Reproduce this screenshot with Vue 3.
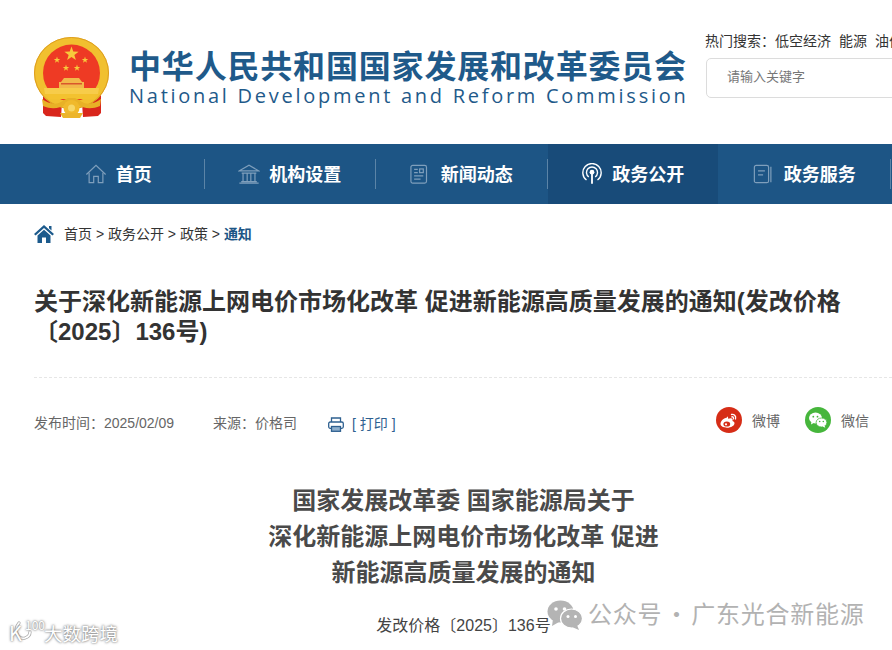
<template>
  <div class="page">
    <header class="head">
      <svg class="emblem" viewBox="0 0 76 82" width="76" height="82">
        <path d="M9 58 L28 66 L27 80 L12 79 L9 76Z" fill="#d9261c"/>
        <path d="M67 58 L48 66 L49 80 L64 79 L67 76Z" fill="#d9261c"/>
        <ellipse cx="37.5" cy="36" rx="37.5" ry="36" fill="#f1c02f"/>
        <ellipse cx="37.5" cy="36" rx="37" ry="35.5" fill="none" stroke="#dd9d1f" stroke-width="1"/>
        <circle cx="37.5" cy="36" r="28.5" fill="#ee3a24"/>
        <polygon :points="star(37.5,17,7.5)" fill="#f7c93c"/>
        <polygon :points="star(23,23,3.4)" fill="#f7c93c"/>
        <polygon :points="star(51,23,3.4)" fill="#f7c93c"/>
        <polygon :points="star(32,31,3.4)" fill="#f7c93c"/>
        <polygon :points="star(43,31,3.4)" fill="#f7c93c"/>
        <path d="M30 41 H45 L48 45 H50 V51 H25 V45 H27Z" fill="#f2b84a"/>
        <path d="M27 46 H48 V47.500 H27Z" fill="#d9572c"/>
        <path d="M10 51 H65 L64 57 H11Z" fill="#f7cc4a"/>
        <path d="M12 57 H63 L60 62 H15Z" fill="#f3c22f"/>
        <path d="M8 62 C16 68 24 68 30 63 L34 61 H41 L45 63 C51 68 59 68 67 62 L66 69 C57 73 49 71 44 68 H31 C26 71 18 73 9 69Z" fill="#e8b126"/>
        <circle cx="37.5" cy="71" r="8" fill="#f0b92b"/>
        <circle cx="37.5" cy="71" r="3.5" fill="#f7d766"/>
        <path d="M26 76 H49 L46 81 H29Z" fill="#ecb52a"/>
      </svg>
      <div class="brand">
        <div class="brand-cn">中华人民共和国国家发展和改革委员会</div>
        <div class="brand-en">National Development and Reform Commission</div>
      </div>
      <div class="search-col">
        <div class="hot">热门搜索：<span>低空经济</span><span>能源</span><span>油价</span></div>
        <div class="search-box">请输入关键字</div>
      </div>
    </header>

    <nav class="nav">
      <template v-for="(item, i) in navItems" :key="item.label">
        <a class="nav-item" :class="{ active: item.active }">
          <svg class="nav-icon" viewBox="0 0 24 24" width="22" height="22" fill="none" stroke-width="1.3" :stroke="item.active ? '#fff' : '#7f9fbc'">
            <g v-if="item.icon === 'home'"><path d="M1.5 12.5 12 2.5l10.5 10"/><path d="M4.5 10.5V21.5H9.5V14.5H14.5V21.5H19.5V10.5"/></g>
            <g v-else-if="item.icon === 'bank'"><path d="M1.5 8.5 12 2.5l10.5 6Z"/><path d="M4 11H20M5.5 11V20M10 11V20M14 11V20M18.500 11V20M1.500 22H22.500M3.500 20.300H20.500"/></g>
            <g v-else-if="item.icon === 'news'"><rect x="1" y="2.500" width="17" height="19.500" rx="2"/><path d="M4.500 7H8.500M4.500 10.500H8.500M4.500 14H14.500M4.500 17.500H11.500"/><rect x="10.500" y="6.500" width="4" height="4"/></g>
            <g v-else-if="item.icon === 'signal'"><circle cx="12" cy="10" r="2.600" fill="#fff" stroke="none"/><path d="M12 11V22.500" stroke-width="2"/><path d="M8.500 15.200a6 6 0 1 1 7 0M6 18.600a10 10 0 1 1 12 0" stroke-width="1.500"/></g>
            <g v-else><rect x="1.500" y="2.500" width="15.500" height="19" rx="2"/><path d="M5.500 8.500H13M5.500 13H11M19.500 4V21"/></g>
          </svg>
          <span class="nav-label">{{ item.label }}</span>
        </a>
        <i class="sep" :class="{ hidden: item.active }"></i>
      </template>
    </nav>

    <main class="content">
      <div class="crumb">
        <svg class="crumb-home" viewBox="0 0 20 18" width="20" height="18">
          <path d="M10 0 L20 9 L18.400 10.500 L10 3 L1.600 10.500 L0 9Z M15 1 H17.500 V5.500 L15 3.300Z" fill="#1c5a8c"/>
          <path d="M3.500 10.500 L10 4.800 L16.500 10.500 V18 H12 V12.500 H8 V18 H3.500Z" fill="#1c5a8c"/>
        </svg>
        <span class="crumb-text">首页 &gt; 政务公开 &gt; 政策 &gt; <b>通知</b></span>
      </div>

      <h1 class="title">关于深化新能源上网电价市场化改革 促进新能源高质量发展的通知(发改价格〔2025〕136号)</h1>

      <div class="meta">
        <span class="date">发布时间：2025/02/09</span>
        <span class="source">来源：价格司</span>
        <svg class="printer" viewBox="0 0 16 15" width="16" height="15" fill="none" stroke="#2e6090" stroke-width="1.300">
          <path d="M3.500 5V1H12.500V5"/>
          <rect x="0.700" y="5" width="14.600" height="6.300" rx="1.500"/>
          <rect x="3.500" y="9.500" width="9" height="4.800" fill="#8fb0cd"/>
        </svg>
        <span class="print">[ 打印 ]</span>
        <div class="share">
          <span class="circle weibo">
            <svg viewBox="0 0 26 26" width="26" height="26">
              <path d="M11 10.500c-4 .800-6.500 4-6.500 6.300 0 2.500 3 3.900 6.500 3.900 4.300 0 7.500-2.300 7.500-4.500 0-1.500-1.300-2-2.100-2.300.6-1.500.2-2.600-1.600-2.700-1 0-2 .3-2.700.6.300-1.200-.2-2.300-1.100-2.300z" fill="#fff"/>
              <ellipse cx="10.800" cy="17" rx="3.400" ry="2.600" fill="#d62d17"/>
              <circle cx="10" cy="17.300" r="1.100" fill="#fff"/>
              <path d="M15.500 7.500c2.800-.5 4.800 1.800 4 4.500M15.800 9.800c1.200-.2 2 .8 1.700 2" fill="none" stroke="#fff" stroke-width="1.300" stroke-linecap="round"/>
            </svg>
          </span>
          <span class="share-label">微博</span>
          <span class="circle wechat">
            <svg viewBox="0 0 26 26" width="26" height="26">
              <ellipse cx="10.500" cy="11" rx="6.500" ry="5.400" fill="#fff"/>
              <path d="M6.500 14.500 6 17.500 9.500 15.500Z" fill="#fff"/>
              <ellipse cx="16.500" cy="15.500" rx="5.400" ry="4.500" fill="#fff" stroke="#46b63c" stroke-width=".8"/>
              <path d="M19.500 18.500 20.300 20.800 17.500 19.500Z" fill="#fff"/>
              <circle cx="8.300" cy="9.700" r=".9" fill="#46b63c"/><circle cx="12.500" cy="9.700" r=".9" fill="#46b63c"/>
              <circle cx="14.700" cy="14.500" r=".8" fill="#46b63c"/><circle cx="18.300" cy="14.500" r=".8" fill="#46b63c"/>
            </svg>
          </span>
          <span class="share-label">微信</span>
        </div>
      </div>

      <h2 class="doc-title">国家发展改革委 国家能源局关于<br>深化新能源上网电价市场化改革 促进<br>新能源高质量发展的通知</h2>
      <p class="doc-no">发改价格〔2025〕136号</p>
    </main>

    <div class="wm-left">
      <svg class="wm-arc" viewBox="0 0 34 26" width="34" height="26" fill="none">
        <path d="M11 4 C5 11 10 21 17 19 C20 18 22 16 22 13" stroke="#a8a8a8" stroke-width="3.200" stroke-linecap="round"/>
        <path d="M11 4 C5 11 10 21 17 19 C20 18 22 16 22 13" stroke="#fff" stroke-width="1.800" stroke-linecap="round"/>
      </svg>
      <span class="wm-k">K</span><span class="wm-sup">100</span><span class="wm-name">大数跨境</span>
    </div>
    <div class="wm-right">
      <svg viewBox="0 0 36 30" width="36" height="30">
        <ellipse cx="13.500" cy="11.500" rx="13" ry="11" fill="#b4b4b4"/>
        <path d="M6 19 5 26 12 22Z" fill="#b4b4b4"/>
        <ellipse cx="24.500" cy="18.500" rx="11" ry="9.500" fill="#b4b4b4" stroke="#fff" stroke-width="1.200"/>
        <path d="M30 25 32 30 25 27Z" fill="#b4b4b4"/>
        <circle cx="9" cy="9" r="1.800" fill="#fff"/><circle cx="17.500" cy="9" r="1.800" fill="#fff"/>
        <circle cx="21" cy="16.500" r="1.500" fill="#fff"/><circle cx="28.500" cy="16.500" r="1.500" fill="#fff"/>
      </svg>
      <span class="wm-text">公众号 · 广东光合新能源</span>
    </div>
  </div>
</template>

<script setup>
const navItems = [
  { label: '首页', icon: 'home' },
  { label: '机构设置', icon: 'bank' },
  { label: '新闻动态', icon: 'news' },
  { label: '政务公开', icon: 'signal', active: true },
  { label: '政务服务', icon: 'book' }
]

function star(cx, cy, r) {
  const pts = []
  for (let i = 0; i < 10; i++) {
    const rad = i % 2 ? r * 0.4 : r
    const a = -Math.PI / 2 + (i * Math.PI) / 5
    pts.push(`${(cx + rad * Math.cos(a)).toFixed(2)},${(cy + rad * Math.sin(a)).toFixed(2)}`)
  }
  return pts.join(' ')
}
</script>

<style>
html, body { margin: 0; background: #fff; overflow: hidden; }
</style>

<style scoped>
.page {
  position: relative;
  width: 892px;
  height: 650px;
  overflow: hidden;
  background: #fff;
  font-family: "Liberation Sans", "Noto Sans CJK SC", sans-serif;
  color: #333;
}
.head {
  height: 144px;
  box-sizing: border-box;
  padding: 37px 0 0 34px;
  display: flex;
  align-items: flex-start;
}
.emblem { flex: none; }
.brand { margin-left: 19px; width: 570px; flex: none; padding-top: 8px; color: #1f5a8a; }
.brand-cn {
  font-family: "Noto Sans CJK SC", sans-serif;
  font-weight: 700;
  font-size: 32px;
  line-height: 38px;
  letter-spacing: .82px;
  white-space: nowrap;
}
.brand-en {
  font-family: "Open Sans", sans-serif;
  font-size: 20px;
  line-height: 24px;
  letter-spacing: 2.73px;
  white-space: nowrap;
  margin-top: 1px;
}
.search-col { margin-left: 6px; flex: none; width: 260px; margin-top: -6px; }
.hot { font-size: 14px; line-height: 20px; color: #333; white-space: nowrap; }
.hot span { margin-right: 8px; }
.search-box {
  margin: 7px 0 0 1px;
  height: 40px;
  box-sizing: border-box;
  border: 1px solid #dcdcdc;
  border-radius: 5px;
  padding-left: 20px;
  font-size: 13px;
  line-height: 36px;
  color: #777;
}
.nav {
  height: 60px;
  padding-left: 33px;
  display: flex;
  align-items: stretch;
  background: #1d5585;
}
.nav-item {
  flex: 0 0 170.5px;
  display: flex;
  align-items: center;
  justify-content: center;
  gap: 9px;
  color: #fff;
  font-family: "Noto Sans CJK SC", sans-serif;
  font-weight: 700;
  font-size: 18px;
}
.nav-label { padding-bottom: 2px; }
.nav-item.active { background: #184b79; }
.nav-icon { flex: none; }
.sep { flex: 0 0 1px; align-self: center; height: 30px; background: rgba(255, 255, 255, .28); }
.sep.hidden { background: transparent; }
.content { width: 859px; box-sizing: border-box; margin-left: 34px; }
.crumb { height: 60px; display: flex; align-items: center; font-size: 14px; color: #333; white-space: pre; }
.crumb-home { margin-right: 10px; }
.crumb-text { padding-bottom: 2px; }
.crumb b { color: #1d5585; font-weight: 700; }
.title {
  margin: 23px 0 0;
  padding-bottom: 30px;
  border-bottom: 1px dashed #e6e6e6;
  font-size: 24px;
  line-height: 30px;
  font-weight: 700;
  color: #333;
  width: 858px;
  padding-right: 40px;
  box-sizing: border-box;
}
.meta {
  margin-top: 24px;
  height: 40px;
  display: flex;
  align-items: center;
  font-size: 14px;
  color: #666;
  white-space: nowrap;
}
.source { margin-left: 39px; }
.printer { margin-left: 31px; margin-top: 4px; }
.print { margin-left: 8px; margin-top: 1px; color: #2e6090; }
.share { margin-left: auto; padding-right: 24px; display: flex; align-items: center; margin-top: -4px; }
.circle { width: 26px; height: 26px; border-radius: 50%; display: block; }
.circle svg { display: block; }
.weibo { background: #d62d17; }
.wechat { background: #46b63c; margin-left: 25px; }
.share-label { margin-left: 10px; color: #666; }
.doc-title {
  margin: 41px 0 0;
  text-align: center;
  font-size: 24px;
  line-height: 36px;
  font-weight: 700;
  color: #4a4a4a;
}
.doc-no { margin: 20px 0 0; text-align: center; font-size: 16px; line-height: 30px; color: #444; }
.wm-left {
  position: absolute;
  left: 9px;
  top: 619px;
  display: flex;
  align-items: center;
  color: #fff;
  text-shadow: 0 0 2px #777, 0 0 3px #999;
  font-family: "Noto Sans CJK SC", sans-serif;
  line-height: 26px;
}
.wm-arc { position: absolute; left: -1px; top: 0; }
.wm-k { position: relative; font-size: 20px; font-weight: 400; margin-top: 1px; width: 16px; }
.wm-sup { position: relative; font-size: 12px; line-height: 12px; margin-top: -15px; width: 19px; }
.wm-name { font-size: 18.500px; }
.wm-right {
  position: absolute;
  left: 547px;
  top: 600px;
  display: flex;
  align-items: center;
  gap: 5px;
  font-family: "Noto Sans CJK SC", sans-serif;
  color: #b2b2b2;
  font-size: 24px;
  letter-spacing: .75px;
  word-spacing: -4px;
  line-height: 30px;
  white-space: nowrap;
}
.wm-text { margin-top: -5px; }
</style>
